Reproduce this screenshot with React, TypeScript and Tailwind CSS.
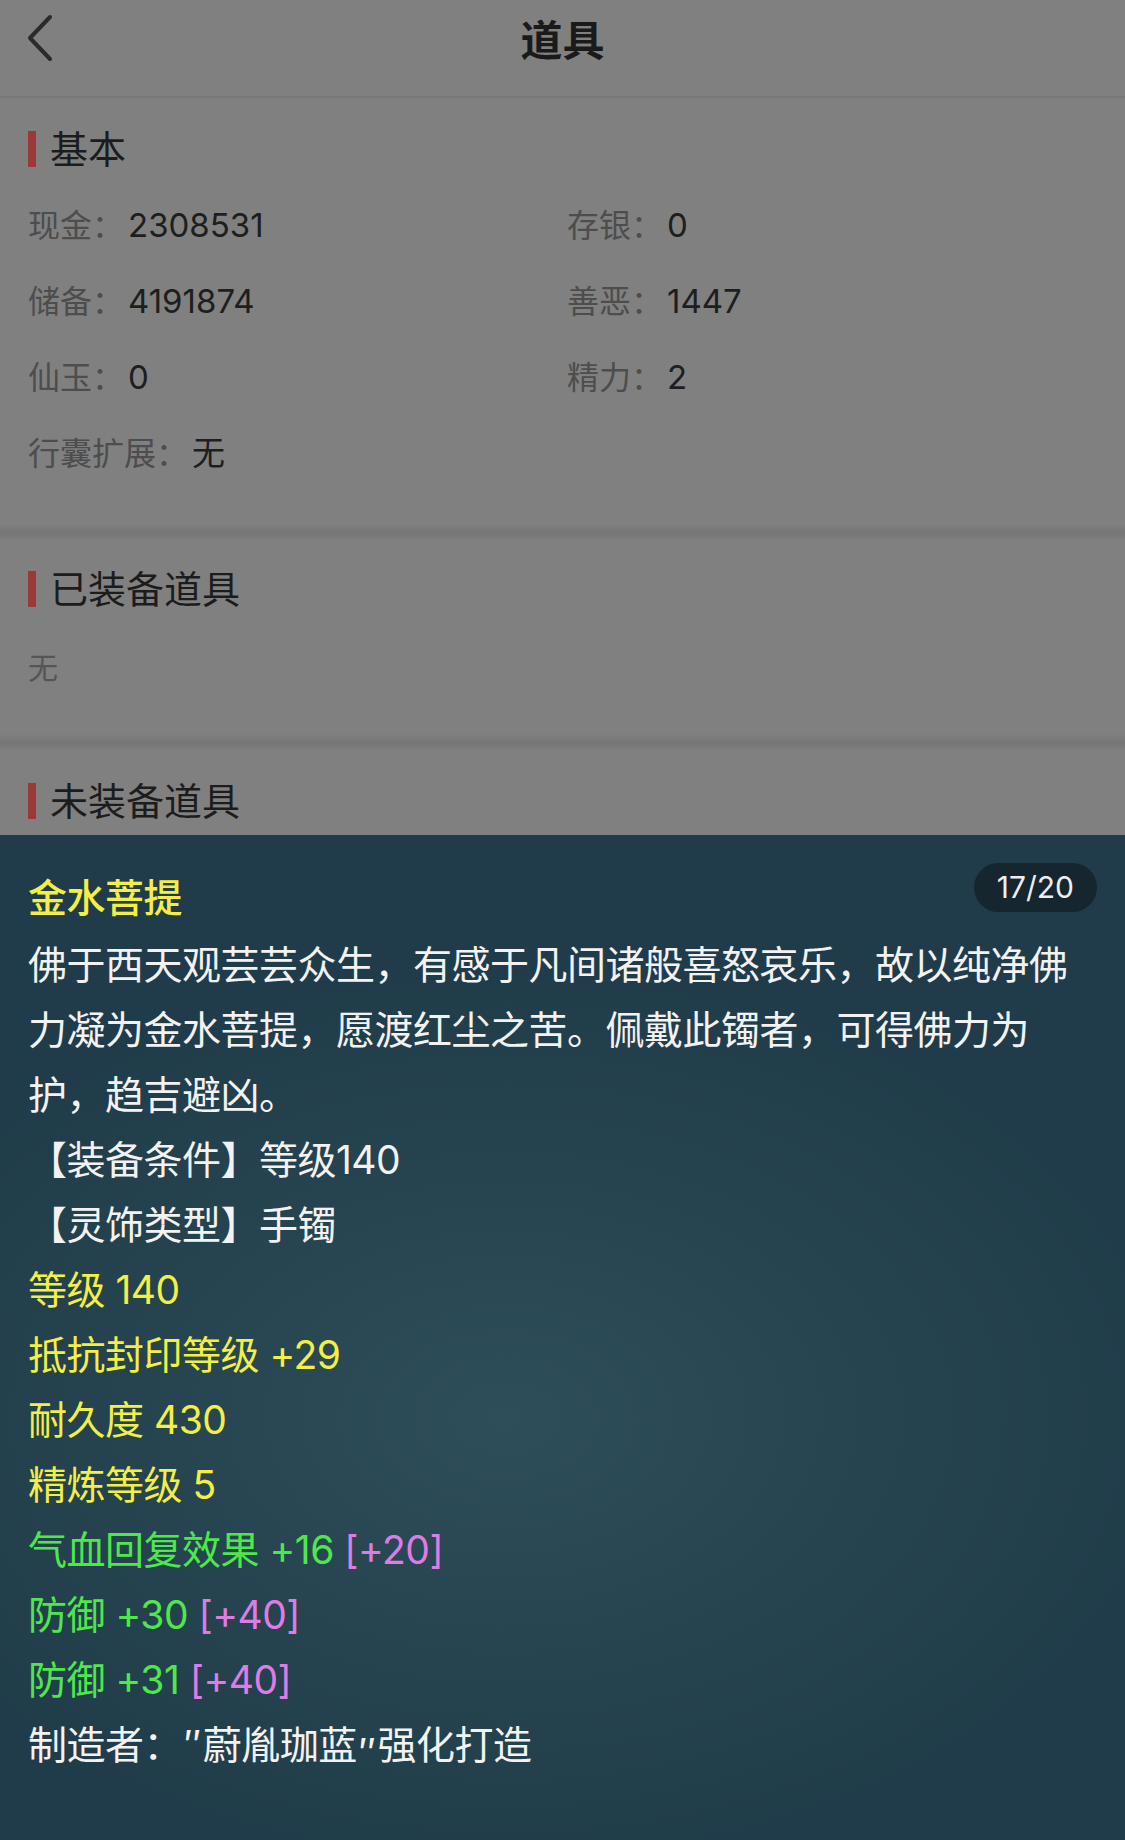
import React from "react";

const basic = [
    ["现金：", "2308531", "存银：", "0"],
    ["储备：", "4191874", "善恶：", "1447"],
    ["仙玉：", "0", "精力：", "2"],
];

const SectionTitle: React.FC<{ title: string }> = ({ title }) => (
    <div className="flex items-center h-[44px]">
        <span className="w-[8px] h-[36px] bg-[#9c383a]" />
        <span className="ml-[14px] text-[38px] leading-[44px] text-[#1c1c1c]">{title}</span>
    </div>
);

const Field: React.FC<{ label: string; value: string }> = ({ label, value }) => (
    <div className="flex items-center h-[76px] text-[32px]">
        <span className="text-[#4d4d4d]">{label}</span>
        <span className="ml-[4px] text-[33px] text-[#1e1e1e]">{value}</span>
    </div>
);

const Separator = () => <div className="h-[15px] bg-gradient-to-b from-[#7e7e7e] via-[#767676] to-[#7e7e7e]" />;

const App: React.FC = () => {
    return (
        <div className="w-[1125px] h-[1840px] flex flex-col bg-[#808080] overflow-hidden font-['Inter','Noto_Sans_CJK_SC',sans-serif]">
            {/* header */}
            <header className="h-[98px] border-b-2 border-[#777777] grid grid-cols-[1fr_auto_1fr]">
                <div className="pl-[26px] pt-[13px]">
                    <svg width="28" height="50" viewBox="0 0 28 50" fill="none">
                        <path d="M24 4 L4 25 L24 46" stroke="#2b2b2b" strokeWidth="4" strokeLinecap="round" strokeLinejoin="round" />
                    </svg>
                </div>
                <h1 className="pt-[18px] text-[42px] leading-[46px] font-bold text-[#1a1a1a]">道具</h1>
                <div />
            </header>

            {/* 基本 */}
            <section className="px-[28px] pt-[29px] pb-[33px]">
                <SectionTitle title="基本" />
                <div className="mt-[17px] grid grid-cols-[539px_1fr]">
                    {basic.map((r, i) => (
                        <React.Fragment key={i}>
                            <Field label={r[0]} value={r[1]} />
                            <Field label={r[2]} value={r[3]} />
                        </React.Fragment>
                    ))}
                    <Field label="行囊扩展：" value="无" />
                </div>
            </section>
            <Separator />

            {/* 已装备道具 */}
            <section className="px-[28px] pt-[27px] pb-[29px]">
                <SectionTitle title="已装备道具" />
                <div className="mt-[19px] h-[76px] flex items-center text-[30px] text-[#555555]">无</div>
            </section>
            <Separator />

            {/* 未装备道具 */}
            <section className="px-[28px] pt-[29px] pb-[12px]">
                <SectionTitle title="未装备道具" />
            </section>

            {/* item detail sheet */}
            <div className="flex-1 px-[28px] pt-[30px] bg-[radial-gradient(ellipse_60%_45%_at_45%_58%,#2e4e59_0%,#26444f_55%,#203c4a_100%)] text-[39px] leading-[65px] tracking-[-0.5px] text-[#f2f2f2] [text-spacing-trim:space-all]">
                <div className="flex justify-between items-start">
                    <div className="font-medium text-[#f3ef45]">金水菩提</div>
                    <div className="-mt-[2px] h-[49px] px-[23px] rounded-full bg-[#15262f] text-[30px] leading-[49px] tracking-normal text-[#eeeeee]">17/20</div>
                </div>
                <div className="mt-[2px]">
                    <p>佛于西天观芸芸众生，有感于凡间诸般喜怒哀乐，故以纯净佛力凝为金水菩提，愿渡红尘之苦。佩戴此镯者，可得佛力为护，趋吉避凶。</p>
                    <p>【装备条件】等级140</p>
                    <p>【灵饰类型】手镯</p>
                    <p className="text-[#f3ef45]">等级 140</p>
                    <p className="text-[#f3ef45]">抵抗封印等级 +29</p>
                    <p className="text-[#f3ef45]">耐久度 430</p>
                    <p className="text-[#f3ef45]">精炼等级 5</p>
                    <p className="text-[#4fe84b]">气血回复效果 +16 <span className="text-[#de7ce6]">[+20]</span></p>
                    <p className="text-[#4fe84b]">防御 +30 <span className="text-[#de7ce6]">[+40]</span></p>
                    <p className="text-[#4fe84b]">防御 +31 <span className="text-[#de7ce6]">[+40]</span></p>
                    <p>
                        制造者：<span className="inline-block px-[2px]">″</span>蔚胤珈蓝<span className="inline-block px-[2px] translate-y-[8px]">″</span>强化打造
                    </p>
                </div>
            </div>
        </div>
    );
};

export default App;
